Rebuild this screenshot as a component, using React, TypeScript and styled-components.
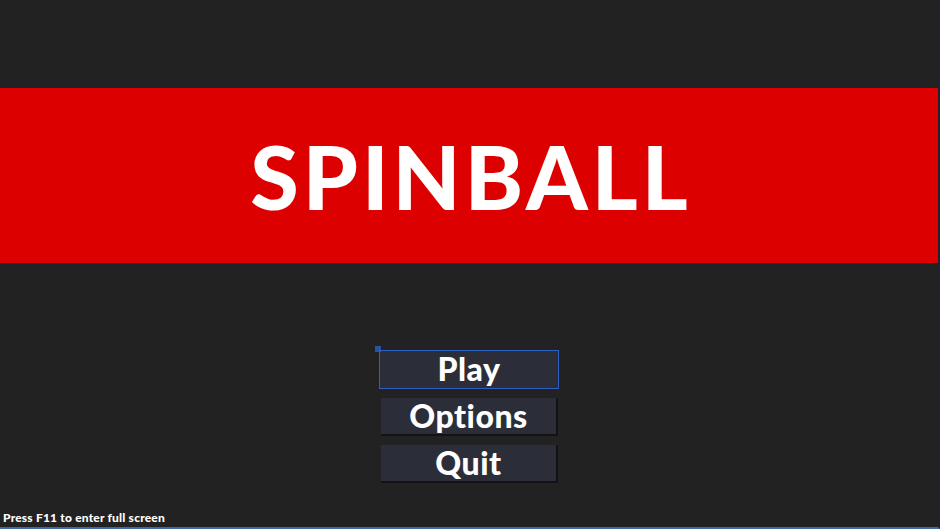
import React from "react";
import styled, { createGlobalStyle } from "styled-components";

const Global = createGlobalStyle`
  html, body { margin: 0; padding: 0; background: #222222; }
  #root { height: 529px; }
`;

const Page = styled.div`
  height: 529px;
  display: flex;
  flex-direction: column;
  background: #222222;
  border-bottom: 2px solid #3d6aa0;
  border-right: 2px solid #1c2230;
  box-sizing: border-box;
  font-family: "Lato", "Noto Sans", sans-serif;
  overflow: hidden;
`;

const Banner = styled.div`
  margin-top: 88px;
  height: 175px;
  background: #dc0000;
  display: flex;
  align-items: center;
  justify-content: center;
`;

const Title = styled.h1`
  margin: 0;
  color: #ffffff;
  font-family: "Lato", sans-serif;
  font-weight: 900;
  font-size: 88px;
  letter-spacing: 4px;
  line-height: 1;
  padding-left: 4px;
`;

const Menu = styled.div`
  margin-top: 87px;
  display: flex;
  flex-direction: column;
  align-items: center;
  gap: 9px;
`;

const ButtonWrap = styled.div`
  position: relative;
`;

const MenuButton = styled.button<{ $focused?: boolean }>`
  width: ${(p) => (p.$focused ? "180px" : "177px")};
  height: ${(p) => (p.$focused ? "39px" : "38px")};
  margin: 0 0 0 ${(p) => (p.$focused ? "0" : "1px")};
  padding: 0 0 1px;
  background: #2b2e38;
  border: ${(p) => (p.$focused ? "1px solid #2d5fc4" : "none")};
  border-right: ${(p) => (p.$focused ? "1px solid #2d5fc4" : "2px solid #121318")};
  border-bottom: ${(p) => (p.$focused ? "1px solid #2d5fc4" : "2px solid #121318")};
  box-sizing: border-box;
  color: #ffffff;
  font-family: "Lato", sans-serif;
  font-weight: 900;
  font-size: 32px;
  letter-spacing: 0.5px;
  line-height: 1;
  cursor: pointer;
  display: flex;
  align-items: center;
  justify-content: center;
`;

const FocusMark = styled.span`
  position: absolute;
  left: -4px;
  top: -4px;
  width: 6px;
  height: 6px;
  background: #2d5fc4;
  opacity: 0.8;
`;

const Footer = styled.div`
  margin-top: auto;
  padding: 0 0 3px 3px;
  color: #ffffff;
  font-family: "Lato", sans-serif;
  font-weight: 900;
  font-size: 12px;
  letter-spacing: 0.2px;
  line-height: 13px;
`;

export default function App() {
  return (
    <>
      <Global />
      <Page>
        <Banner>
          <Title>SPINBALL</Title>
        </Banner>
        <Menu>
          <ButtonWrap>
            <FocusMark />
            <MenuButton $focused>Play</MenuButton>
          </ButtonWrap>
          <ButtonWrap>
            <MenuButton>Options</MenuButton>
          </ButtonWrap>
          <ButtonWrap>
            <MenuButton>Quit</MenuButton>
          </ButtonWrap>
        </Menu>
        <Footer>Press F11 to enter full screen</Footer>
      </Page>
    </>
  );
}
